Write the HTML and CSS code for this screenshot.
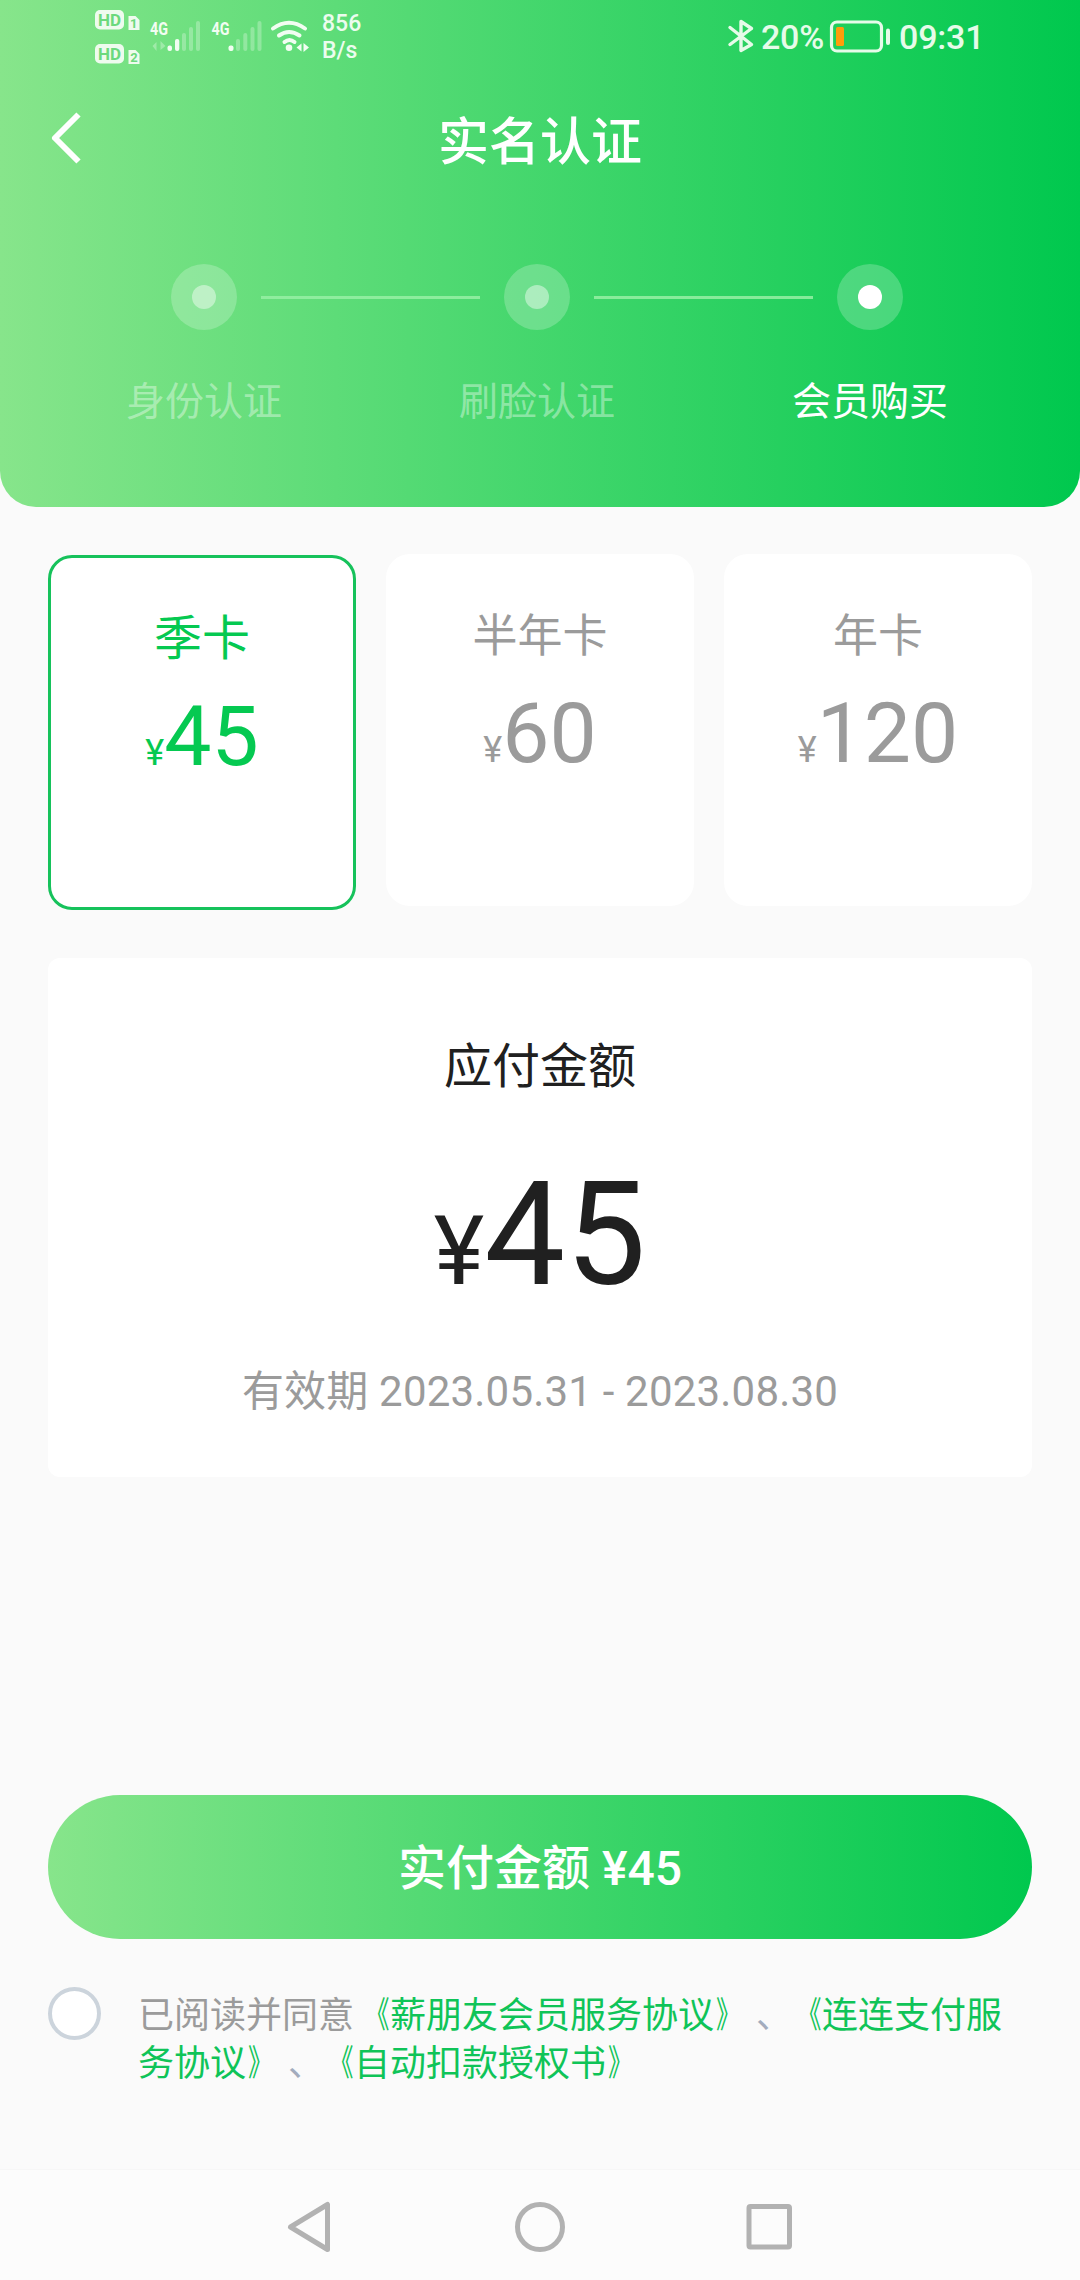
FILE: index.html
```html
<!DOCTYPE html>
<html lang="zh-CN">
<head>
<meta charset="utf-8">
<title>实名认证</title>
<link rel="stylesheet" href="styles.css">
</head>
<body>
<div class="screen">
  <header class="header">
    <div class="status">
      <div class="status-left">
        <svg width="55" height="75" viewBox="90 0 55 75">
          <rect x="95" y="10" width="29" height="19.5" rx="5" fill="#eefbee"/>
          <rect x="95" y="44" width="29" height="19.5" rx="5" fill="#eefbee"/>
          <path d="M128.5 16h7l4 4v10h-11zM128.5 50h7l4 4v10h-11z" fill="#eefbee"/>
          <g class="cutout">
            <text x="98" y="26" font-size="17" textLength="23">HD</text>
            <text x="98" y="60" font-size="17" textLength="23">HD</text>
            <text x="130" y="28" font-size="13">1</text>
            <text x="130.3" y="62" font-size="13">2</text>
          </g>
        </svg>
        <svg width="60" height="75" viewBox="145 0 60 75" fill="#f2fdf2">
          <text class="net" x="150" y="34.5" textLength="18" lengthAdjust="spacingAndGlyphs">4G</text>
          <path d="M156.500 42v9l-4-5zM160.500 41v9l5-4z" opacity=".35"/>
          <rect x="167.500" y="45.500" width="4.500" height="5.500" rx="2"/>
          <rect x="175" y="39" width="4.300" height="12" rx="2"/>
          <g opacity=".3"><rect x="182" y="33" width="4" height="18" rx="2"/><rect x="189" y="27" width="4" height="24" rx="2"/><rect x="196" y="21" width="4" height="30" rx="2"/></g>
        </svg>
        <svg width="60" height="75" viewBox="205 0 60 75" fill="#f2fdf2">
          <text class="net" x="211.500" y="34.500" textLength="18" lengthAdjust="spacingAndGlyphs">4G</text>
          <rect x="228.500" y="45.500" width="5" height="5.500" rx="2"/>
          <g opacity=".3"><rect x="236" y="39" width="4" height="12" rx="2"/><rect x="243.300" y="33" width="4" height="18" rx="2"/><rect x="250.500" y="27" width="4" height="24" rx="2"/><rect x="257.500" y="21" width="4" height="30" rx="2"/></g>
        </svg>
        <svg width="55" height="75" viewBox="265 0 55 75">
          <g fill="none" stroke="#f2fdf2" stroke-width="4" stroke-linecap="round">
            <path d="M273 28.500q16-11.500 32 0M279 35.500q10-7 20.500 0M284.500 42q5-4 10 0"/>
          </g>
          <circle cx="289" cy="47.800" r="3.300" fill="#f2fdf2"/>
          <path d="M301.500 43.500v8l-5-4zM303.500 43v9l5.500-4.500z" fill="#f2fdf2"/>
        </svg>
        <div class="speed">856<br>B/s</div>
      </div>
      <div class="status-right">
        <svg width="36" height="75" viewBox="724 0 36 75">
          <path d="M729 27.500L750.500 44.500L740 50.500V21.500L750.500 28.500L729 44.500" fill="none" stroke="#e6fbe9" stroke-width="3.400" stroke-linejoin="round" stroke-linecap="round"/>
        </svg>
        <span class="status-text">20%</span>
        <svg class="battery" width="66" height="75" viewBox="829 0 66 75">
          <rect x="832.500" y="22" width="50" height="29" rx="5.500" fill="none" stroke="#e6fbe9" stroke-width="3.200"/>
          <rect x="887" y="28.500" width="4" height="16.500" rx="2" fill="#e6fbe9"/>
          <rect x="837" y="27" width="8" height="19" rx="1.500" fill="#ff9d0a"/>
        </svg>
        <span class="status-text">09:31</span>
      </div>
    </div>
    <div class="titlebar">
      <svg width="40" height="60" viewBox="0 0 40 60"><path d="M33.500 6.500L10 30L33.500 53.500" fill="none" stroke="#fff" stroke-width="6" stroke-linejoin="round"/></svg>
      <h1 class="title">实名认证</h1>
    </div>
    <div class="steps">
      <div class="step"><span class="ring"><i class="dot"></i></span><span class="step-label">身份认证</span></div>
      <i class="step-line"></i>
      <div class="step"><span class="ring"><i class="dot"></i></span><span class="step-label">刷脸认证</span></div>
      <i class="step-line"></i>
      <div class="step active"><span class="ring"><i class="dot"></i></span><span class="step-label">会员购买</span></div>
    </div>
  </header>

  <main class="main">
    <div class="plans">
      <div class="plan selected"><div class="plan-name">季卡</div><div class="plan-price"><small>¥</small>45</div></div>
      <div class="plan"><div class="plan-name">半年卡</div><div class="plan-price"><small>¥</small>60</div></div>
      <div class="plan"><div class="plan-name">年卡</div><div class="plan-price"><small>¥</small>120</div></div>
    </div>
    <section class="amount">
      <div class="amount-title">应付金额</div>
      <div class="amount-price"><small>¥</small>45</div>
      <div class="amount-date">有效期 2023.05.31 - 2023.08.30</div>
    </section>
    <button class="pay">实付金额 ¥45</button>
    <div class="agree">
      <span class="check"></span>
      <p class="agree-text">已阅读并同意<a><b class="open">《</b>薪朋友会员服务协议<b class="close">》</b></a><span class="sep">、</span><a><b class="open">《</b>连连支付服务协议<b class="close">》</b></a><span class="sep">、</span><a><b class="open">《</b>自动扣款授权书<b class="close">》</b></a></p>
    </div>
  </main>

  <nav class="nav">
    <svg width="50" height="56" viewBox="0 0 50 56"><path d="M4.500 28L41.500 5.500V50.500Z"/></svg>
    <svg width="56" height="56" viewBox="0 0 56 56"><circle cx="28" cy="28" r="22.500"/></svg>
    <svg width="50" height="56" viewBox="0 0 50 56"><rect x="5" y="7.500" width="40.500" height="40.500" rx="1.500"/></svg>
  </nav>
</div>
</body>
</html>
```
FILE: styles.css
```css
* { box-sizing: border-box; }
body { margin: 0; }
.screen {
  width: 1080px;
  height: 2280px;
  display: flex;
  flex-direction: column;
  overflow: hidden;
  background: #fafafa;
  font-family: Roboto, "Noto Sans CJK SC", sans-serif;
}
svg { display: block; flex: none; }

.header {
  height: 507px;
  border-radius: 0 0 36px 36px;
  background: linear-gradient(90deg, #87e58b, #00c84e);
  color: #fff;
}
.status {
  height: 75px;
  padding: 0 96px 0 90px;
  display: flex;
  justify-content: space-between;
}
.status-left, .status-right { display: flex; }
.cutout { fill: #6cd97d; font-family: Roboto, sans-serif; font-weight: 700; }
.net { font: 700 18.500px Roboto, sans-serif; }
.speed {
  padding: 10px 0 0 2px;
  font-size: 23px;
  font-weight: 500;
  line-height: 27px;
  color: #ecfcee;
}
.status-right { width: 260px; margin-right: -1px; }
.status-text {
  font-size: 34px;
  line-height: 75px;
  font-weight: 500;
  letter-spacing: -.2px;
  color: #e6fbe9;
  white-space: nowrap;
}
.battery { margin: 0 5px 0 4px; }

.titlebar {
  height: 126px;
  padding: 0 45px;
  display: grid;
  grid-template-columns: 40px 1fr 40px;
  align-items: center;
}
.title {
  margin: 0;
  padding-top: 9px;
  text-align: center;
  font-size: 51px;
  font-weight: 500;
  line-height: 75px;
}
.steps {
  margin-top: 63px;
  padding-right: 6px;
  display: flex;
  justify-content: center;
  gap: 24px;
}
.step {
  width: 66px;
  display: flex;
  flex-direction: column;
  align-items: center;
  gap: 43px;
}
.ring {
  width: 66px;
  height: 66px;
  border-radius: 50%;
  background: rgba(255, 255, 255, .22);
  display: flex;
  align-items: center;
  justify-content: center;
}
.dot { width: 24px; height: 24px; border-radius: 50%; background: rgba(255, 255, 255, .43); }
.active .dot { background: #fff; }
.step-label {
  font-size: 39px;
  line-height: 58px;
  white-space: nowrap;
  color: rgba(255, 255, 255, .4);
}
.active .step-label { color: #fff; }
.step-line { width: 219px; height: 3px; margin-top: 32px; background: rgba(150, 240, 165, .85); }

.main { padding: 47px 48px 0; flex: 1; }
.plans { display: grid; grid-template-columns: repeat(3, 1fr); gap: 30px; height: 356px; align-items: start; }
.plan {
  height: 352px;
  padding-top: 50px;
  border-radius: 24px;
  background: #fff;
  text-align: center;
  color: #9b9b9b;
}
.plan-name { font-size: 45px; line-height: 66px; }
.plan-price { font-size: 84px; line-height: 98px; margin-top: 15px; }
.plan-price small { font-size: 36px; }
.plan.selected {
  height: 355px;
  margin-top: 1px;
  padding-top: 48px;
  border: 3px solid #16c25b;
  color: #05c951;
}
.selected .plan-name { font-size: 48px; }
.selected .plan-price { margin-top: 16px; }

.amount {
  height: 519px;
  margin-top: 48px;
  padding-top: 74px;
  border-radius: 12px;
  background: #fff;
  text-align: center;
}
.amount-title { font-size: 48px; line-height: 70px; color: #202020; }
.amount-price { font-size: 144px; line-height: 170px; margin-top: 48px; color: #202020; }
.amount-price small { font-size: 96px; }
.amount-date { font-size: 42px; line-height: 60px; margin-top: 26px; letter-spacing: .2px; color: #9b9b9b; }

.pay {
  display: block;
  width: 984px;
  height: 144px;
  margin-top: 318px;
  padding: 3px 0 0;
  border: 0;
  border-radius: 72px;
  background: linear-gradient(90deg, #87e58b, #00c84e);
  color: #fff;
  font: 500 48px/141px Roboto, "Noto Sans CJK SC", sans-serif;
}
.agree { display: flex; gap: 37px; margin-top: 48px; }
.check {
  width: 53px;
  height: 53px;
  flex: none;
  border: 4.500px solid #ccd4dc;
  border-radius: 50%;
  background: #fff;
}
.agree-text {
  margin: 5px 0 0;
  width: 870px;
  font-size: 36px;
  line-height: 48px;
  color: #9b9b9b;
  text-spacing-trim: space-all;
}
.agree-text a { color: #0fc458; }
/* Full-width book-title marks, narrowed towards the title they enclose */
.open, .close { display: inline-block; width: 36px; font-weight: 400; line-height: 1; transform: scaleX(.68); }
.open { transform-origin: 34px 50%; }
.close { transform-origin: 6px 50%; }
.sep { display: inline-block; width: 36px; padding-left: 6px; line-height: 1; color: #a3acbd; white-space: nowrap; }

.nav {
  height: 111px;
  padding: 4px 286px 0;
  border-top: 1px solid #f6f6f6;
  background: #fcfcfc;
  display: flex;
  justify-content: space-between;
  align-items: center;
}
.nav svg { fill: none; stroke: #b2b2b2; stroke-width: 5; stroke-linejoin: round; }
```
